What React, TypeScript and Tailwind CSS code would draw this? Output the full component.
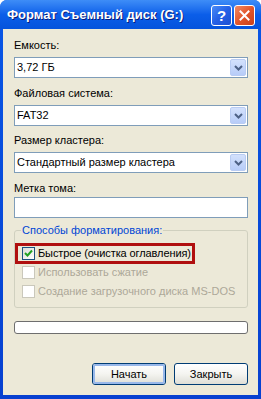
export default function App() {
  return (
    <div className="flex h-[399px] w-[261px] flex-col overflow-hidden rounded-t-[7px] bg-gradient-to-b from-[#0A57E6] to-[#0740D0] font-['Liberation_Sans',Arial,sans-serif] text-[11px] text-black">
      {/* Title bar */}
      <div className="flex h-[29px] shrink-0 items-center bg-gradient-to-b from-[#3E8DF7] via-[#0B5EE9] to-[#0553DC] pl-[7px] pr-[6px]">
        <span className="flex-1 text-[13px] font-bold leading-none text-white [text-shadow:1px_1px_0_#0A1C7A]">
          Формат Съемный диск (G:)
        </span>
        <div className="mt-[2px] flex gap-[2px]">
          <div className="flex h-[21px] w-[21px] items-center justify-center rounded-[3px] border border-white bg-gradient-to-br from-[#4A8CF7] via-[#2560E6] to-[#1C4FD2] text-[15px] font-bold leading-none text-white">
            ?
          </div>
          <div className="flex h-[21px] w-[21px] items-center justify-center rounded-[3px] border border-white bg-gradient-to-br from-[#F08A64] via-[#E2552A] to-[#C9401A]">
            <svg width="11" height="11" viewBox="0 0 11 11">
              <path d="M1.5 1.5 L9.5 9.5 M9.5 1.5 L1.5 9.5" stroke="#fff" strokeWidth="2" strokeLinecap="square" />
            </svg>
          </div>
        </div>
      </div>

      {/* Body */}
      <div className="mx-[3px] mb-[4px] flex flex-1 flex-col bg-[#ECE9D8] pl-[11px] pr-[10px] pt-[9px]">
        <Label text="Емкость:" />
        <Combo value="3,72 ГБ" />
        <div className="mt-[8px]">
          <Label text="Файловая система:" />
        </div>
        <Combo value="FAT32" />
        <div className="mt-[7px]">
          <Label text="Размер кластера:" />
        </div>
        <Combo value="Стандартный размер кластера" />
        <div className="mt-[8px]">
          <Label text="Метка тома:" />
        </div>
        <div className="-mt-[3px] h-[21px] border border-[#7F9DB9] bg-white" />

        {/* Format options group */}
        <fieldset className="mt-[5px] rounded-[3px] border border-[#D0D0BF] pb-[9px]">
          <legend className="ml-[6px] px-[1px] leading-[14px] text-[#0046D5]">Способы форматирования:</legend>
          <div className="mt-[6px] flex h-[21px] w-[180px] items-center border-[3px] border-[#B00F0F] pl-[4px]">
            <CheckBox checked />
            <span className="ml-[3px] whitespace-nowrap leading-none tracking-[-0.1px]">Быстрое (очистка оглавления)</span>
          </div>
          <div className="mt-[2px] flex items-center pl-[7px]">
            <CheckBox disabled />
            <span className="ml-[3px] leading-none text-[#ACA899]">Использовать сжатие</span>
          </div>
          <div className="mt-[6px] flex items-center pl-[7px]">
            <CheckBox disabled />
            <span className="ml-[3px] leading-none text-[#ACA899]">Создание загрузочного диска MS-DOS</span>
          </div>
        </fieldset>

        {/* Progress */}
        <div className="mt-[13px] h-[13px] rounded-[3px] border border-[#6E6E6E] bg-white" />

        {/* Buttons */}
        <div className="mt-[29px] flex justify-end gap-[8px]">
          <Button text="Начать" focused />
          <Button text="Закрыть" />
        </div>
      </div>
    </div>
  );
}

function Label({ text }: { text: string }) {
  return <div className="mb-[5px] leading-[14px]">{text}</div>;
}

function Combo({ value }: { value: string }) {
  return (
    <div className="flex h-[21px] items-center border border-[#7F9DB9] bg-white pl-[2px] pr-[1px]">
      <span className="flex-1 leading-none">{value}</span>
      <div className="flex h-[17px] w-[16px] items-center justify-center rounded-[2px] border border-[#B9CCF3] bg-gradient-to-b from-[#D3E1FC] to-[#B7CCF8]">
        <svg width="9" height="6" viewBox="0 0 9 6">
          <path d="M1 1 L4.5 4.5 L8 1" fill="none" stroke="#4D6185" strokeWidth="2" />
        </svg>
      </div>
    </div>
  );
}

function CheckBox({ checked, disabled }: { checked?: boolean; disabled?: boolean }) {
  return (
    <div
      className={`flex h-[13px] w-[13px] shrink-0 items-center justify-center border ${
        disabled ? "border-[#CAC8BB] bg-white" : "border-[#1C5180] bg-gradient-to-br from-[#DCDCD7] to-white"
      }`}
    >
      {checked && (
        <svg width="9" height="9" viewBox="0 0 9 9">
          <path d="M1 4 L3.5 6.5 L8 1.5" fill="none" stroke="#21A121" strokeWidth="2" />
        </svg>
      )}
    </div>
  );
}

function Button({ text, focused }: { text: string; focused?: boolean }) {
  return (
    <div className="flex h-[22px] w-[74px] items-center justify-center rounded-[3px] border border-[#003C74] bg-gradient-to-b from-white via-[#F4F4F0] to-[#DEDED6]">
      <div
        className={`flex h-full w-full items-center justify-center rounded-[2px] ${
          focused ? "shadow-[inset_0_0_0_2px_#98B8EA]" : ""
        }`}
      >
        {text}
      </div>
    </div>
  );
}
